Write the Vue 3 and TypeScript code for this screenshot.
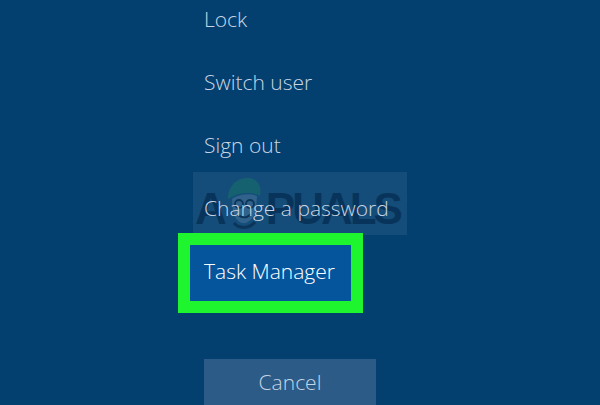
<script setup lang="ts">
const items = ["Lock", "Switch user", "Sign out", "Change a password"];
</script>

<template>
  <div class="screen">
    <div class="watermark">
      <span class="wm-letter">A</span>
      <svg class="mascot" viewBox="0 0 40 56" width="40" height="56">
        <path d="M5 24 C5 9 16 2 26 3 C35 4 39 11 37 21 C29 16 14 17 5 24 Z" fill="#17656f" />
        <path d="M9 24 C15 19 28 18 34 21 L33 34 C31 44 25 49 19 48 C13 47 9 38 9 24 Z" fill="#356690" />
        <circle cx="16" cy="29" r="4" fill="none" stroke="#0b3155" stroke-width="1.8" />
        <circle cx="27" cy="29" r="4" fill="none" stroke="#0b3155" stroke-width="1.8" />
        <path d="M15 40 C19 43 24 43 28 39" fill="none" stroke="#0b3155" stroke-width="1.8" />
        <path d="M11 48 C16 54 26 54 32 47" fill="none" stroke="#0b3155" stroke-width="3" />
      </svg>
      <span class="wm-letter">PUALS</span>
    </div>

    <div class="menu">
      <div v-for="item in items" :key="item" class="item">{{ item }}</div>
      <div class="highlight">
        <div class="selected">Task Manager</div>
      </div>
      <button class="cancel">Cancel</button>
    </div>
  </div>
</template>

<style scoped>
.screen {
  position: relative;
  width: 600px;
  height: 405px;
  overflow: hidden;
  background: #03406f;
  font-family: "Open Sans", "Liberation Sans", sans-serif;
  font-weight: 300;
}

.menu {
  position: relative;
  display: flex;
  flex-direction: column;
  width: 172px;
  margin-left: 204px;
  margin-top: -12px;
}

.item {
  height: 63px;
  line-height: 63px;
  font-size: 21px;
  color: #c8d5e5;
  white-space: nowrap;
}

.highlight {
  align-self: flex-start;
  margin-left: -26px;
  margin-top: -7px;
  width: 185px;
  height: 80px;
  box-sizing: border-box;
  border: 12px solid #1ff52e;
}

.selected {
  height: 100%;
  padding-left: 14px;
  line-height: 52px;
  background: #05559c;
  color: #ffffff;
  font-size: 21px;
}

.cancel {
  margin-top: 46px;
  height: 60px;
  padding: 0 0 14px;
  border: 0;
  background: #2b5b86;
  color: #c3d5e7;
  font: inherit;
  font-size: 21px;
}

.watermark {
  position: absolute;
  left: 193px;
  top: 172px;
  width: 214px;
  height: 63px;
  display: flex;
  align-items: center;
  padding: 10px 0 0 2px;
  box-sizing: border-box;
  background: rgba(255, 255, 255, 0.07);
}

.wm-letter {
  font-family: "Liberation Sans", sans-serif;
  font-weight: 700;
  font-size: 44px;
  line-height: 50px;
  letter-spacing: -3px;
  white-space: nowrap;
  color: rgba(3, 42, 78, 0.7);
}

.mascot {
  flex: none;
  margin: -11px 3px 0 -1px;
  opacity: 0.85;
}
</style>

<style>
html,
body {
  margin: 0;
  background: #03406f;
}
</style>
